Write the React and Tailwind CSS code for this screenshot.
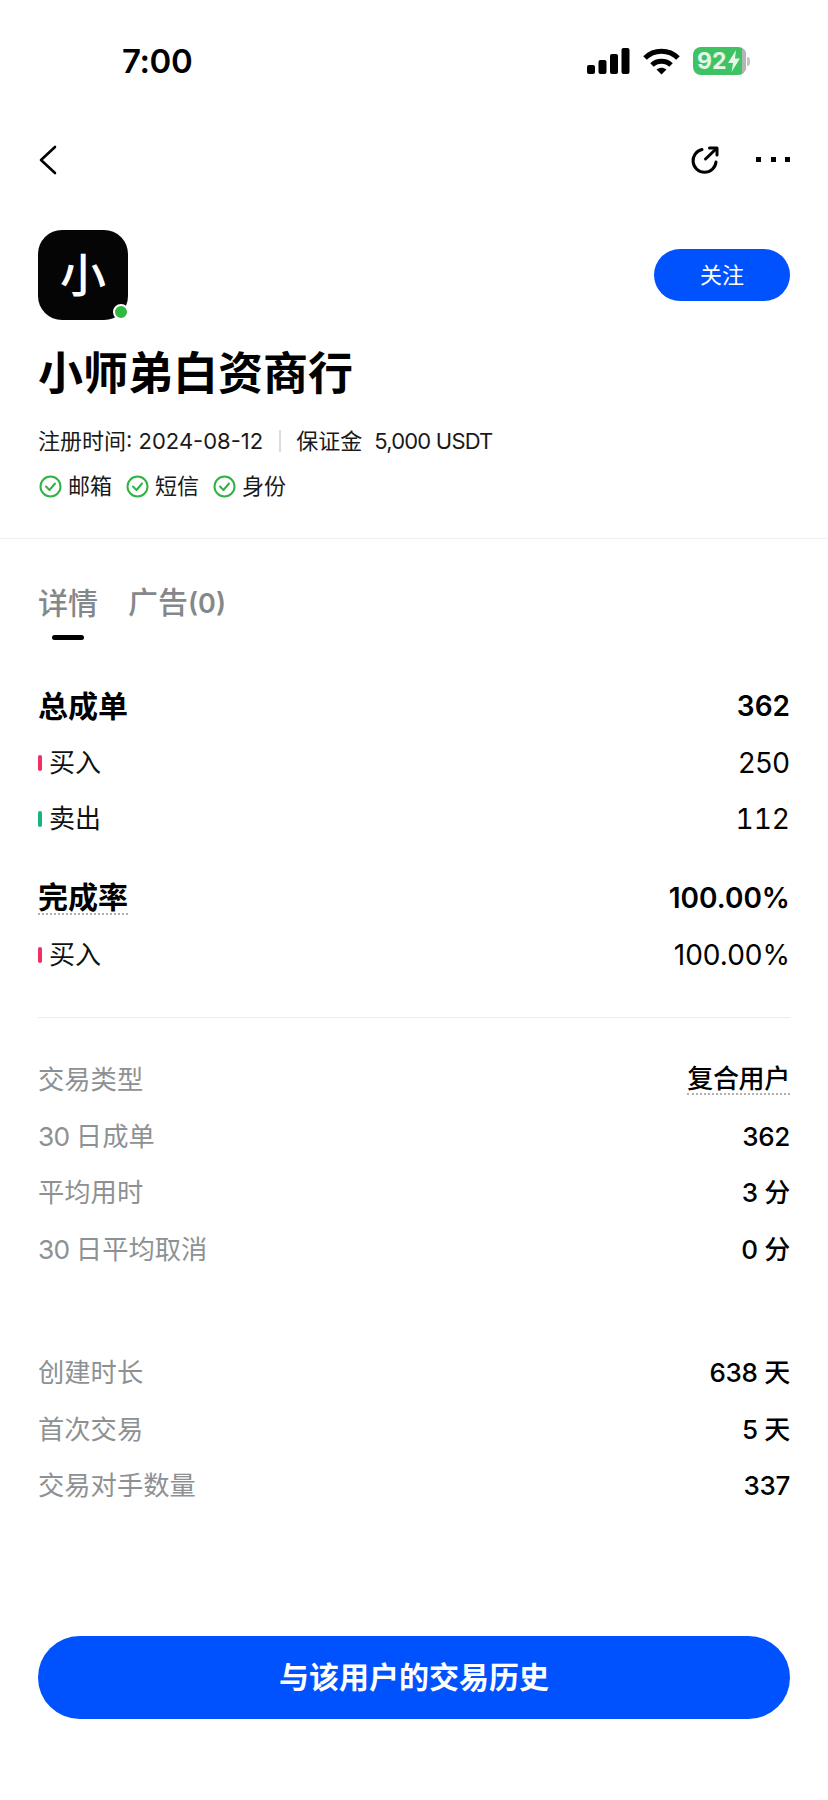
const fontStack = "font-['Inter','Noto_Sans_CJK_SC',sans-serif]";

const SignalIcon = () => (
  <svg width="43" height="26" viewBox="0 0 43 26" fill="#000">
    <rect x="0" y="17" width="8" height="9" rx="2" />
    <rect x="11.5" y="12" width="8" height="14" rx="2" />
    <rect x="23" y="6" width="8" height="20" rx="2" />
    <rect x="34.5" y="0" width="8" height="26" rx="2" />
  </svg>
);

const WifiIcon = () => (
  <svg width="37" height="27" viewBox="0 0 37 27" fill="none" stroke="#000" strokeWidth="5">
    <path d="M2 10 C 11 1, 26 1, 35 10" />
    <path d="M9 17 C 14 12, 23 12, 28 17" />
    <path d="M13.5 21.5 L18.5 26.5 L23.5 21.5 C 20 19, 17 19, 13.5 21.5 Z" fill="#000" stroke="none" />
  </svg>
);

const BatteryIcon = () => (
  <div className="relative flex items-center">
    <div className="relative flex h-[28px] w-[53px] items-center overflow-hidden rounded-[8px] bg-[#3ec263] pl-[4px]">
      <span className="text-[23px] leading-none font-bold text-[#e4f7e9]">92</span>
      <svg className="ml-[1px]" width="14" height="22" viewBox="0 0 14 22" fill="#e4f7e9">
        <path d="M9 0 L1 13 H6 L4.5 22 L13 8.5 H8 Z" />
      </svg>
      <div className="absolute top-0 right-0 h-full w-[4px] bg-[#b5b5b5]" />
    </div>
    <div className="ml-[1px] h-[9px] w-[3px] rounded-r-full bg-[#c4c4c4]" />
  </div>
);

const BackIcon = () => (
  <svg width="20" height="30" viewBox="0 0 20 30" fill="none" stroke="#000" strokeWidth="2.6" strokeLinecap="round" strokeLinejoin="round">
    <path d="M17 2 L3 15 L17 28" />
  </svg>
);

const ShareIcon = () => (
  <svg width="30" height="30" viewBox="0 0 30 30" fill="none" stroke="#000" strokeWidth="3" strokeLinecap="round" strokeLinejoin="round">
    <path d="M12 4.5 A 11.5 11.5 0 1 0 26 17" />
    <path d="M15.5 14 L26.5 3.5" />
    <path d="M19.5 3 H27 V10" />
  </svg>
);

const CheckBadge = ({ label }) => (
  <div className="flex items-center gap-[6px]">
    <svg width="23" height="23" viewBox="0 0 23 23" fill="none" stroke="#2fb344" strokeWidth="2" strokeLinecap="round" strokeLinejoin="round">
      <circle cx="11.5" cy="11.5" r="10" />
      <path d="M7 11.5 L10.5 15 L16 8.5" />
    </svg>
    <span className="text-[22px] leading-[30px] text-[#1a1a1a]">{label}</span>
  </div>
);

const StatRow = ({ label, value, color, bold, dotted, tabular }) => (
  <div className="flex h-[56.4px] items-center justify-between">
    {color ? (
      <div className="flex items-center gap-[7px]">
        <div className={`h-[16px] w-[4px] rounded-full ${color}`} />
        <span className="text-[26px] leading-[36px] text-[#111]">{label}</span>
      </div>
    ) : (
      <span className={`text-[30px] text-black font-bold ${dotted ? "border-b-2 border-dotted border-[#b0b0b0] leading-[32px]" : "leading-[36px]"}`}>
        {label}
      </span>
    )}
    <span className={`text-[28px] leading-[36px] text-black ${tabular ? "tabular-nums" : ""} ${bold ? "font-semibold" : "font-normal"}`}>
      {value}
    </span>
  </div>
);

const InfoRow = ({ label, value, dotted }) => (
  <div className="flex h-[56.6px] items-center justify-between">
    <span className="text-[26.3px] leading-[36px] text-[#8e9193]">{label}</span>
    <span
      className={`text-[26px] tracking-[-0.3px] text-black ${
        dotted ? "border-b-2 border-dotted border-[#b0b0b0] leading-[28px] font-medium" : "leading-[32px] font-[450]"
      }`}
    >
      {value}
    </span>
  </div>
);

const Thirty = () => <span className="tracking-[-0.8px]">30 </span>;

const App = () => {
  return (
    <div className={`flex h-[1800px] w-[828px] flex-col overflow-hidden bg-white ${fontStack}`}>
      {/* Status bar */}
      <div className="flex h-[122px] items-center justify-between pr-[78px] pl-[122px]">
        <span className="text-[33px] leading-none font-semibold tracking-[-0.4px] text-black">7:00</span>
        <div className="flex items-center gap-[13px]">
          <SignalIcon />
          <WifiIcon />
          <BatteryIcon />
        </div>
      </div>

      {/* Nav */}
      <div className="flex h-[76px] items-center justify-between pr-[38px] pl-[38px]">
        <BackIcon />
        <div className="flex items-center gap-[36px]">
          <ShareIcon />
          <div className="flex gap-[9.5px] pb-[2px]">
            <div className="h-[5px] w-[5px] bg-black" />
            <div className="h-[5px] w-[5px] bg-black" />
            <div className="h-[5px] w-[5px] bg-black" />
          </div>
        </div>
      </div>

      {/* Profile */}
      <div className="border-b border-[#f0f0f0] px-[38px] pt-[32px] pb-[37px]">
        <div className="flex items-center justify-between">
          <div className="relative flex h-[90px] w-[90px] items-center justify-center rounded-[24px] bg-[#050505]">
            <span className="text-[46px] leading-none font-medium text-white">小</span>
            <div className="absolute right-[-1px] bottom-[0px] h-[16px] w-[16px] rounded-full border-2 border-white bg-[#2fb93f]" />
          </div>
          <button className="h-[52px] w-[136px] rounded-full bg-[#0052ff] text-[22px] text-white">关注</button>
        </div>
        <h1 className="mt-[26px] text-[45px] leading-[56px] font-bold text-black">小师弟白资商行</h1>
        <div className="mt-[24px] flex items-center text-[22px] leading-[30px] text-[#1a1a1a]">
          <span>注册时间: 2024-08-12</span>
          <div className="mr-[15px] ml-[16px] h-[22px] w-[2px] bg-[#dcdcdc]" />
          <span>保证金</span>
          <span className="ml-[12px] tracking-[-0.8px]">5,000 USDT</span>
        </div>
        <div className="mt-[15px] flex items-center gap-[14px] pl-[1px]">
          <CheckBadge label="邮箱" />
          <CheckBadge label="短信" />
          <CheckBadge label="身份" />
        </div>
      </div>

      {/* Tabs */}
      <div className="px-[38px] pt-[43px]">
        <div className="flex items-center gap-[30px] text-[30px] leading-[40px] font-medium text-[#85888b]">
          <span>详情</span>
          <span>
            广告<span className="text-[27px] font-semibold">(0)</span>
          </span>
        </div>
        <div className="mt-[11px] ml-[14px] h-[5px] w-[32px] rounded-full bg-black" />
      </div>

      {/* Stats */}
      <div className="px-[38px] pt-[38px]">
        <StatRow label="总成单" value="362" bold />
        <StatRow label="买入" value="250" color="bg-[#f0305f]" />
        <StatRow label="卖出" value="112" color="bg-[#16b57c]" tabular />
        <div className="mt-[23px]">
          <StatRow label="完成率" value="100.00%" bold dotted />
          <StatRow label="买入" value="100.00%" color="bg-[#f0305f]" />
        </div>
        <div className="mt-[34px] h-[1px] bg-[#ececec]" />
      </div>

      {/* Info */}
      <div className="px-[38px] pt-[34px]">
        <InfoRow label="交易类型" value="复合用户" dotted />
        <InfoRow label={<><Thirty />日成单</>} value="362" />
        <InfoRow label="平均用时" value="3 分" />
        <InfoRow label={<><Thirty />日平均取消</>} value="0 分" />
        <div className="mt-[66.5px]">
          <InfoRow label="创建时长" value="638 天" />
          <InfoRow label="首次交易" value="5 天" />
          <InfoRow label="交易对手数量" value="337" />
        </div>
      </div>

      {/* Bottom button */}
      <div className="px-[38px] pt-[121px]">
        <button className="h-[83px] w-full rounded-full bg-[#0052ff] text-[30px] font-bold text-white">与该用户的交易历史</button>
      </div>
    </div>
  );
};

export default App;
